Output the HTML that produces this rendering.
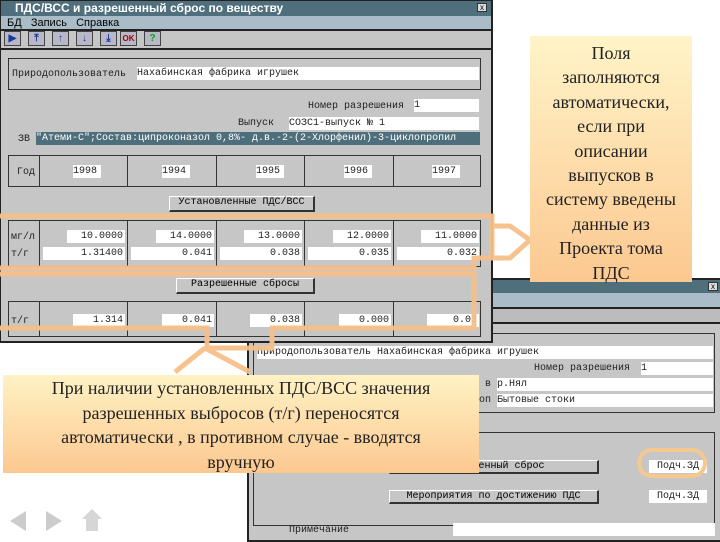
<!DOCTYPE html>
<html><head><meta charset="utf-8"><style>
body{margin:0;width:720px;height:540px;background:#fff;position:relative;overflow:hidden;font-family:"Liberation Mono","DejaVu Sans Mono",monospace;}
.a{position:absolute;box-sizing:border-box}
.win{background:#c6c6c6;border:2px solid #222}
.title{background:#4f6f7d;color:#fff;font:bold 12px "Liberation Sans",sans-serif;line-height:14px;padding-left:14px;white-space:nowrap}
.menu{background:#a9bcc8;font:11px "Liberation Sans",sans-serif;line-height:14px;border-bottom:2px solid #222}
.f{background:#fff;font-size:10px;line-height:13px;white-space:nowrap;overflow:hidden;color:#222}
.r{text-align:right;padding-right:2px}
.lbl{font-size:10px;line-height:13px;white-space:nowrap;color:#222}
.box{border:1px solid #333}
.btn{background:#c6c6c6;border:1px solid #333;border-right:2px solid #333;border-bottom:2px solid #333;font-size:10px;line-height:12px;text-align:center;white-space:nowrap;border-top-color:#fff;border-left-color:#fff}
.tb{background:#b8b8c8;border:1px solid #444;width:17px;height:15px;top:30px;font:bold 10px sans-serif;text-align:center;line-height:14px;color:#1a3a9a}
.co{font-family:"Liberation Serif",serif;color:#222;text-align:center;white-space:nowrap}
</style></head><body>

<!-- Window 2 (behind) -->
<div class="a win" style="left:247px;top:278px;width:475px;height:264px;border-right:none">
 <div class="a title" style="left:0;top:0;width:473px;height:13px"></div>
 <div class="a" style="right:4px;top:2px;width:10px;height:9px;background:#ddd;border:1px solid #333;font:8px sans-serif;line-height:8px;text-align:center">x</div>
 <div class="a menu" style="left:0;top:13px;width:473px;height:16px"></div>
 <div class="a" style="left:0;top:29px;width:473px;height:15px;background:#bcbcbc;border-bottom:2px solid #222"></div>
 <div class="a box" style="left:4px;top:53px;width:462px;height:80px"></div>
 <div class="a f" style="left:8px;top:66px;width:456px">Природопользователь Нахабинская фабрика игрушек</div>
 <div class="a lbl" style="left:285px;top:82px">Номер разрешения</div>
 <div class="a f" style="left:392px;top:82px;width:72px">1</div>
 <div class="a lbl" style="left:236px;top:98px">в</div>
 <div class="a f" style="left:248px;top:98px;width:216px">р.Нял</div>
 <div class="a lbl" style="left:230px;top:114px">оп</div>
 <div class="a f" style="left:248px;top:114px;width:216px">Бытовые стоки</div>
 <div class="a box" style="left:4px;top:152px;width:462px;height:94px"></div>
 <div class="a btn" style="left:140px;top:180px;width:210px;height:14px">Разрешенный сброс</div>
 <div class="a f" style="left:400px;top:180px;width:58px;text-align:center">Подч.ЗД</div>
 <div class="a btn" style="left:140px;top:210px;width:210px;height:14px">Мероприятия по достижению ПДС</div>
 <div class="a f" style="left:400px;top:210px;width:58px;text-align:center">Подч.ЗД</div>
 <div class="a lbl" style="left:40px;top:244px">Примечание</div>
 <div class="a f" style="left:204px;top:243px;width:262px;height:13px"></div>
</div>
<div class="a" style="left:637px;top:448px;width:70px;height:30px;border:4px solid #f5c890;border-radius:16px"></div>

<!-- Window 1 -->
<div class="a win" style="left:-1px;top:-1px;width:494px;height:344px">
 <div class="a title" style="left:0;top:0;width:490px;height:15px">ПДС/ВСС и разрешенный сброс по веществу</div>
 <div class="a" style="left:476px;top:2px;width:10px;height:9px;background:#ddd;border:1px solid #333;font:8px sans-serif;line-height:8px;text-align:center">x</div>
 <div class="a menu" style="left:0;top:15px;width:490px;height:15px;padding-left:6px">БД &nbsp;&nbsp;Запись &nbsp;&nbsp;Справка</div>
 <div class="a tb" style="left:3px">▶</div><div class="a tb" style="left:27px">⤒</div><div class="a tb" style="left:51px">↑</div><div class="a tb" style="left:75px">↓</div><div class="a tb" style="left:99px">⤓</div><div class="a tb" style="left:119px;color:#a00;font-size:8px">OK</div><div class="a tb" style="left:143px;color:#0a0">?</div>
 <div class="a" style="left:0;top:47px;width:490px;height:2px;background:#222"></div>
 <div class="a box" style="left:7px;top:57px;width:473px;height:32px"></div>
 <div class="a lbl" style="left:11px;top:67px">Природопользователь</div>
 <div class="a f" style="left:136px;top:66px;width:342px">Нахабинская фабрика игрушек</div>
 <div class="a lbl" style="left:307px;top:99px">Номер разрешения</div>
 <div class="a f" style="left:413px;top:98px;width:65px">1</div>
 <div class="a lbl" style="left:237px;top:116px">Выпуск</div>
 <div class="a f" style="left:288px;top:116px;width:190px">СОЗС1-выпуск № 1</div>
 <div class="a lbl" style="left:17px;top:132px">ЗВ</div>
 <div class="a f" style="left:35px;top:131px;width:444px;background:#4e6e7c;color:#fff">"Атеми-С";Состав:ципроконазол 0,8%- д.в.-2-(2-Хлорфенил)-3-циклопропил</div>
 <div class="a box" style="left:7px;top:154px;width:473px;height:32px;border-width:1px"></div>
 <div class="a" style="left:38px;top:154px;width:1px;height:32px;background:#333"></div>
 <div class="a" style="left:126px;top:154px;width:1px;height:32px;background:#333"></div>
 <div class="a" style="left:215px;top:154px;width:1px;height:32px;background:#333"></div>
 <div class="a" style="left:303px;top:154px;width:1px;height:32px;background:#333"></div>
 <div class="a" style="left:392px;top:154px;width:1px;height:32px;background:#333"></div>
 <div class="a lbl" style="left:16px;top:165px">Год</div>
 <div class="a f" style="left:72px;top:164px;width:28px">1998</div>
 <div class="a f" style="left:161px;top:164px;width:28px">1994</div>
 <div class="a f" style="left:255px;top:164px;width:28px">1995</div>
 <div class="a f" style="left:343px;top:164px;width:28px">1996</div>
 <div class="a f" style="left:431px;top:164px;width:28px">1997</div>
 <div class="a btn" style="left:168px;top:195px;width:146px;height:16px">Установленные ПДС/ВСС</div>
 <div class="a box" style="left:7px;top:219px;width:473px;height:47px"></div>
 <div class="a" style="left:38px;top:219px;width:1px;height:47px;background:#333"></div>
 <div class="a" style="left:126px;top:219px;width:1px;height:47px;background:#333"></div>
 <div class="a" style="left:215px;top:219px;width:1px;height:47px;background:#333"></div>
 <div class="a" style="left:303px;top:219px;width:1px;height:47px;background:#333"></div>
 <div class="a" style="left:392px;top:219px;width:1px;height:47px;background:#333"></div>
 <div class="a lbl" style="left:10px;top:230px">мг/л</div>
 <div class="a lbl" style="left:10px;top:247px">т/г</div>
 <div class="a f r" style="left:66px;top:229px;width:58px">10.0000</div>
 <div class="a f r" style="left:155px;top:229px;width:58px">14.0000</div>
 <div class="a f r" style="left:243px;top:229px;width:58px">13.0000</div>
 <div class="a f r" style="left:332px;top:229px;width:58px">12.0000</div>
 <div class="a f r" style="left:420px;top:229px;width:58px">11.0000</div>
 <div class="a f r" style="left:42px;top:246px;width:82px">1.31400</div>
 <div class="a f r" style="left:130px;top:246px;width:83px">0.041</div>
 <div class="a f r" style="left:219px;top:246px;width:82px">0.038</div>
 <div class="a f r" style="left:307px;top:246px;width:83px">0.035</div>
 <div class="a f r" style="left:396px;top:246px;width:82px">0.032</div>
 <div class="a btn" style="left:175px;top:277px;width:139px;height:16px">Разрешенные сбросы</div>
 <div class="a box" style="left:7px;top:300px;width:473px;height:36px"></div>
 <div class="a" style="left:38px;top:300px;width:1px;height:36px;background:#333"></div>
 <div class="a" style="left:126px;top:300px;width:1px;height:36px;background:#333"></div>
 <div class="a" style="left:215px;top:300px;width:1px;height:36px;background:#333"></div>
 <div class="a" style="left:303px;top:300px;width:1px;height:36px;background:#333"></div>
 <div class="a" style="left:392px;top:300px;width:1px;height:36px;background:#333"></div>
 <div class="a lbl" style="left:10px;top:314px">т/г</div>
 <div class="a f r" style="left:72px;top:313px;width:52px">1.314</div>
 <div class="a f r" style="left:161px;top:313px;width:52px">0.041</div>
 <div class="a f r" style="left:249px;top:313px;width:52px">0.038</div>
 <div class="a f r" style="left:338px;top:313px;width:52px">0.000</div>
 <div class="a f r" style="left:426px;top:313px;width:52px">0.03</div>
</div>

<!-- orange arrows -->
<svg class="a" style="left:0;top:0" width="720" height="540">
 <g fill="none" stroke="#f6c08a" stroke-width="5" stroke-linejoin="miter" opacity="0.95">
  <polyline points="0,216 492,216 492,226"/>
  <polyline points="0,268 474,268 474,258 492,258 492,250"/>
  <polygon points="492,226 510,226 530,240 510,258 492,258"/>
  <polyline points="0,274 474,274 474,328 272,328 272,348 205,348"/>
  <polyline points="0,328 207,328 207,348"/>
  <polyline points="205,348 250,372"/>
  <polyline points="205,348 175,372"/>
 </g>
</svg>

<!-- callouts -->
<div class="a co" style="left:530px;top:36px;width:162px;height:246px;background:linear-gradient(#fff4c8,#fcc890);font-size:18px;line-height:24.4px;padding-top:5px">Поля<br>заполняются<br>автоматически,<br>если при<br>описании<br>выпусков в<br>систему введены<br>данные из<br>Проекта тома<br>ПДС</div>
<div class="a co" style="left:3px;top:375px;width:476px;height:98px;background:linear-gradient(#fff2c4,#fcc890);font-size:18px;line-height:24.5px;padding-top:1px">При наличии установленных ПДС/ВСС значения<br>разрешенных выбросов (т/г) переносятся<br>автоматически , в противном случае - вводятся<br>вручную</div>

<!-- nav -->
<svg class="a" style="left:0;top:505px" width="110" height="35">
 <polygon points="10,16 26,6 26,26" fill="#ccc"/>
 <polygon points="46,6 62,16 46,26" fill="#ccc"/>
 <polygon points="92,4 82,14 86,14 86,26 98,26 98,14 102,14" fill="#d6d6d6"/>
</svg>
</body></html>
